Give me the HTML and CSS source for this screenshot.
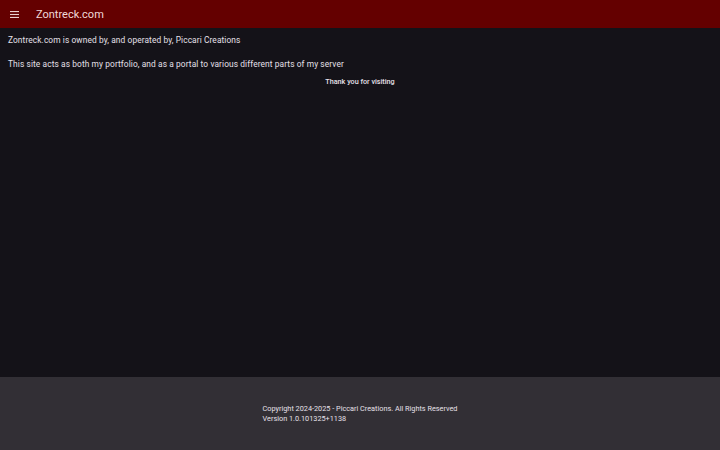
FILE: index.html
```html
<!DOCTYPE html>
<html>
<head>
<meta charset="utf-8">
<link rel="stylesheet" href="styles.css">
</head>
<body>
<div class="page">
  <header class="bar">
    <span class="menu">
      <svg width="9" height="7" viewBox="0 0 9 7"><rect x="0" y="0" width="9" height="1.1" fill="#ead0d0"/><rect x="0" y="2.95" width="9" height="1.1" fill="#ead0d0"/><rect x="0" y="5.9" width="9" height="1.1" fill="#ead0d0"/></svg>
    </span>
    <span class="title">Zontreck.com</span>
  </header>
  <main class="content">
    <p class="line one">Zontreck.com is owned by, and operated by, Piccari Creations</p>
    <p class="line two">This site acts as both my portfolio, and as a portal to various different parts of my server</p>
    <p class="thanks">Thank you for visiting</p>
  </main>
  <footer class="foot">
    <div class="foot-inner">
      <div>Copyright 2024-2025 - Piccari Creations. All Rights Reserved</div>
      <div>Version 1.0.101325+1138</div>
    </div>
  </footer>
</div>
</body>
</html>
```
FILE: styles.css
```css
* { box-sizing: border-box; }
html, body { margin: 0; padding: 0; }
body {
  background: #141218;
  font-family: Roboto, "Liberation Sans", sans-serif;
  color: #e6e0e9;
}
.page {
  width: 720px;
  height: 450px;
  display: flex;
  flex-direction: column;
}
.bar {
  height: 28px;
  background: #640000;
  display: flex;
  align-items: center;
  padding-left: 10px;
  flex-shrink: 0;
}
.menu { width: 9px; height: 7px; display: flex; }
.title {
  margin-left: 17px;
  font-size: 11px;
  color: #f0d8d8;
}
.content {
  flex: 1;
  padding: 0 8px;
}
.line {
  margin: 0;
  font-size: 8.35px;
  letter-spacing: 0.1px;
}
.one { margin-top: 7px; }
.two { margin-top: 14px; }
.thanks {
  margin: 8px 0 0;
  text-align: center;
  font-size: 7.2px;
  font-weight: 500;
}
.foot {
  height: 73px;
  background: #322f35;
  display: flex;
  justify-content: center;
  align-items: center;
  flex-shrink: 0;
}
.foot-inner {
  font-size: 7.3px;
  line-height: 10px;
  padding-top: 1px;
  font-weight: 400;
}
```
